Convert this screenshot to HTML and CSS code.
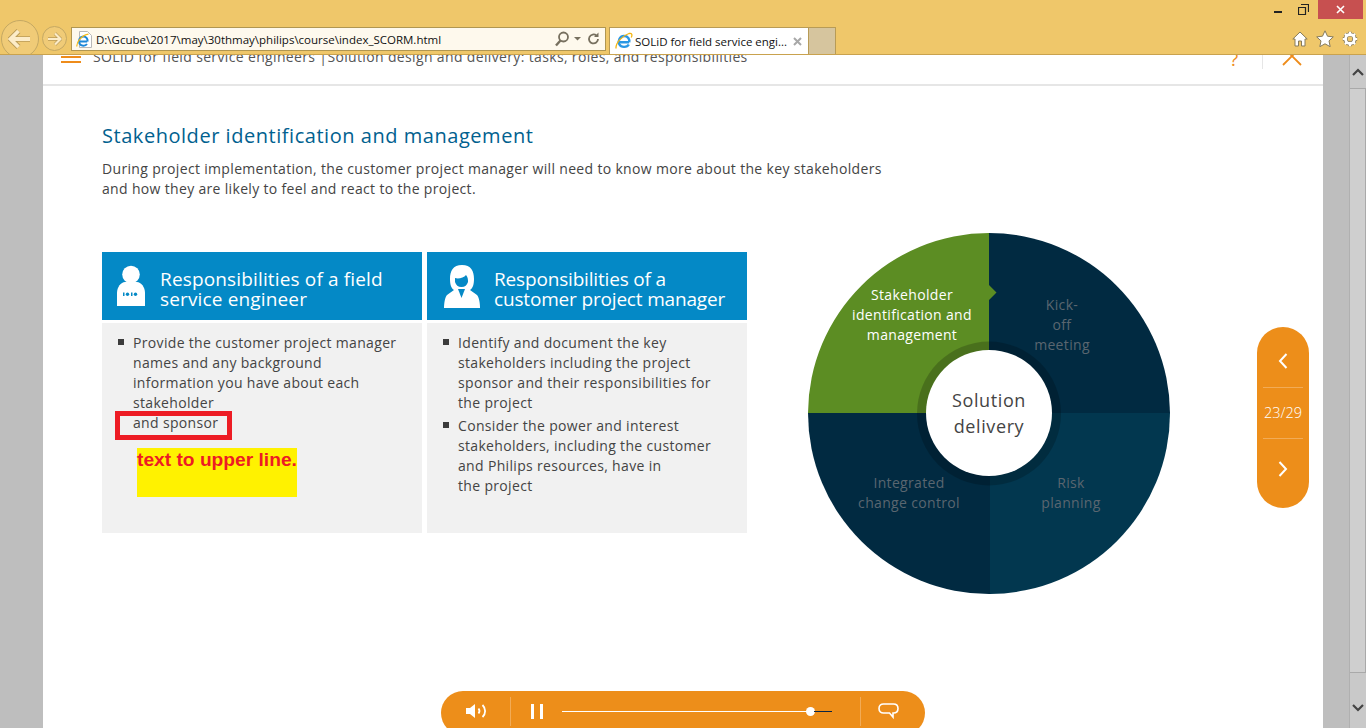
FILE: index.html
```html
<!DOCTYPE html>
<html lang="en">
<head>
<meta charset="utf-8">
<title>SOLiD for field service engineers</title>
<link rel="stylesheet" href="styles.css">
</head>
<body>
<header class="chrome">
  <div class="win-controls">
    <span class="win-min"></span>
    <span class="win-restore"><svg width="11" height="11" viewBox="0 0 11 11"><path d="M3 .5h7.500V8M.5 3.500h7v7h-7z" fill="none" stroke="#222" stroke-width="1.200"/></svg></span>
    <span class="win-close"><svg width="9" height="9" viewBox="0 0 9 9"><path d="M1 1l7 7M8 1l-7 7" stroke="#fff" stroke-width="1.600"/></svg></span>
  </div>
  <div class="toolbar">
    <button class="nav-back"><svg width="24" height="20" viewBox="0 0 24 20"><path d="M10.500 2 2.500 10l8 8M3.500 10H22" fill="none" stroke="#b99b57" stroke-width="5.500"/><path d="M10.500 2 2.500 10l8 8M3.500 10H22" fill="none" stroke="#fcecc8" stroke-width="3.800"/></svg></button>
    <button class="nav-forward"><svg width="15" height="14" viewBox="0 0 15 14"><path d="M8 1.500 13.500 7 8 12.500M13 7H1" fill="none" stroke="#b99b57" stroke-width="3.400"/><path d="M8 1.500 13.500 7 8 12.500M13 7H1" fill="none" stroke="#fcecc8" stroke-width="2.200"/></svg></button>
    <div class="address">
      <svg class="ie-page" width="16" height="17" viewBox="0 0 16 17"><path d="M3.500 .5h8l4 4v12h-12z" fill="#fff" stroke="#b8b8b8"/><path d="M2.800 10.500h8.400M11 13c-1.500 2.200-6 2.400-7.500-.5C2 9 4 5.500 7.200 5.500c3.200 0 4.800 2.500 4.300 5" fill="none" stroke="#1b87d8" stroke-width="2"/><path d="M.8 15.500C.5 11 6 4 12.500 3.200" fill="none" stroke="#f5b915" stroke-width="1.200"/></svg>
      <span class="url">D:\Gcube\2017\may\30thmay\philips\course\index_SCORM.html</span>
      <svg class="addr-tools" width="46" height="16" viewBox="0 0 46 16"><circle cx="8.500" cy="6" r="4.500" fill="none" stroke="#77705f" stroke-width="1.800"/><path d="M5.500 9.500l-4.500 5" stroke="#77705f" stroke-width="2.400"/><path d="M19 6h7l-3.500 3.500z" fill="#77705f"/><path d="M43 8a4.500 4.500 0 1 1-1.500-3.400" fill="none" stroke="#77705f" stroke-width="1.800"/><path d="M43.500 1.500v4.500h-4.500z" fill="#77705f"/></svg>
    </div>
    <div class="tab">
      <svg width="18" height="18" viewBox="0 0 18 18"><path d="M3.500 10.200h10.600M13.800 12.500c-1.500 2.800-7.500 3.500-9.500-.2C2.500 8.500 5 4 9 4c4 0 5.800 3 5.200 6.200" fill="none" stroke="#2a97e4" stroke-width="2.400"/><path d="M1 16.500C.5 11 7.500 3.500 14 1.500c3-.8 3.500 1.500 2.200 4" fill="none" stroke="#f4b612" stroke-width="1.300"/></svg>
      <span class="tab-title">SOLiD for field service engi...</span>
      <svg class="tab-x" width="9" height="9" viewBox="0 0 9 9"><path d="M1 1l7 7M8 1l-7 7" stroke="#a8a8a8" stroke-width="2"/></svg>
    </div>
    <div class="tab-new"></div>
    <div class="tools">
      <svg width="16" height="16" viewBox="0 0 16 16"><path d="M8 1 .8 8H3v7h3.500v-5h3v5H13V8h2.200z" fill="#fff" stroke="#857a5c"/></svg>
      <svg width="18" height="17" viewBox="0 0 18 17"><path d="m9 .8 2.500 5.400 5.800.7-4.300 4 1.200 5.800L9 13.800l-5.200 2.900L5 10.900l-4.300-4 5.800-.7z" fill="#fff" stroke="#857a5c"/></svg>
      <svg width="16" height="16" viewBox="0 0 16 16"><path d="M8 .8v2.800M8 12.400v2.800M.8 8h2.800M12.400 8h2.800M2.900 2.900l2 2M11.100 11.100l2 2M2.900 13.100l2-2M11.100 4.900l2-2" stroke="#857a5c" stroke-width="3.400"/><circle cx="8" cy="8" r="4.500" fill="none" stroke="#857a5c" stroke-width="4.200"/><path d="M8 .8v2.800M8 12.400v2.800M.8 8h2.800M12.400 8h2.800M2.900 2.900l2 2M11.100 11.100l2 2M2.900 13.100l2-2M11.100 4.900l2-2" stroke="#fff" stroke-width="2.200"/><circle cx="8" cy="8" r="4.500" fill="none" stroke="#fff" stroke-width="2.800"/></svg>
    </div>
  </div>
</header>

<div class="viewport">
  <main class="page">
    <div class="course-bar">
      <span class="burger"><i></i><i></i></span>
      <span class="course-title">SOLiD for field service engineers |Solution design and delivery: tasks, roles, and responsibilities</span>
      <span class="help">?</span>
      <span class="bar-sep"></span>
      <svg class="bar-close" width="20" height="20" viewBox="0 0 20 20"><path d="M1 19 19 1M1 1l18 18" stroke="#ee8c1b" stroke-width="1.800"/></svg>
    </div>

    <div class="content">
      <section class="intro">
        <h1>Stakeholder identification and management</h1>
        <p>During project implementation, the customer project manager will need to know more about the key stakeholders<br>and how they are likely to feel and react to the project.</p>
      </section>

      <div class="columns">
        <div class="cards">
          <article class="card">
            <div class="card-head">
              <svg class="card-icon" width="30" height="42" viewBox="0 0 30 42"><circle cx="15" cy="9.500" r="8.800" fill="#fff"/><path d="M1 41V28c0-6 4-11 8-11h12c4 0 8 5 8 11v13z" fill="#fff"/><rect x="7" y="27.500" width="1.500" height="3.500" fill="#0489c6"/><circle cx="11.500" cy="29.200" r="1.700" fill="#0489c6"/><rect x="15" y="27.500" width="1.500" height="3.500" fill="#0489c6"/><circle cx="19.500" cy="29.200" r="1.700" fill="#0489c6"/></svg>
              <h2>Responsibilities of a field service engineer</h2>
            </div>
            <ul class="card-body">
              <li>Provide the customer project manager names and any background information you have about each stakeholder<br>and sponsor</li>
            </ul>
            <div class="annot-box"></div>
            <div class="annot-note">text to upper line.</div>
          </article>
          <article class="card">
            <div class="card-head card-head-b">
              <svg class="card-icon" width="36" height="43" viewBox="0 0 36 43"><path d="M18 0C9 0 6 6 6 14c0 5 1 9 4 11l-7 5C1 32 0 38 0 43h36c0-5-1-11-3-13l-7-5c3-2 4-6 4-11C30 6 27 0 18 0z" fill="#fff"/><path d="M11 13c3 1 9 0 11-3 2 2 2 5 2 7-1 3-3 5-6.500 5S12 20 11 17z" fill="#0489c6"/><path d="M14 24h7l-3.500 9z" fill="#0489c6"/></svg>
              <h2>Responsibilities of a customer project manager</h2>
            </div>
            <ul class="card-body">
              <li>Identify and document the key stakeholders including the project sponsor and their responsibilities for the project</li>
              <li>Consider the power and interest stakeholders, including the customer and Philips resources, have in<br>the project</li>
            </ul>
          </article>
        </div>

        <div class="wheel">
          <svg viewBox="0 0 362 362" width="362" height="362">
            <path d="M181 180V0A181 181 0 0 1 362 180z" fill="#012a41"/>
            <path d="M182 180H362A181 181 0 0 1 182 361z" fill="#02374f"/>
            <path d="M182 180V361A181 181 0 0 1 0 180z" fill="#012a41"/>
            <path d="M181 180H0A181 181 0 0 1 181 0V52l7.500 7.500-7.500 7.500z" fill="#5c8d23"/>
            <circle cx="181" cy="180.500" r="72" fill="#000" fill-opacity=".2"/>
            <circle cx="181" cy="180" r="63" fill="#fff"/>
          </svg>
          <span class="seg seg-active">Stakeholder<br>identification and<br>management</span>
          <span class="seg seg-kick">Kick-<br>off<br>meeting</span>
          <span class="seg seg-change">Integrated<br>change control</span>
          <span class="seg seg-risk">Risk<br>planning</span>
          <span class="hub">Solution<br>delivery</span>
        </div>
      </div>
    </div>

    <nav class="pager">
      <svg width="10" height="16" viewBox="0 0 10 16"><path d="M8.500 1 2 8l6.500 7" fill="none" stroke="#fff" stroke-width="2"/></svg>
      <span class="pager-num">23/29</span>
      <svg width="10" height="16" viewBox="0 0 10 16"><path d="M1.500 1 8 8l-6.500 7" fill="none" stroke="#fff" stroke-width="2"/></svg>
    </nav>

    <div class="player">
      <svg class="p-sound" width="22" height="16" viewBox="0 0 22 16"><path d="M0 5h4l5-4v14l-5-4H0z" fill="#fff"/><path d="M12.500 5.500c1.200 1.500 1.200 3.500 0 5" fill="none" stroke="#fff" stroke-width="1.800"/><path d="M16.500 2c3.500 3.500 3.500 8.500 0 12" fill="none" stroke="#fff" stroke-width="1.800"/></svg>
      <span class="p-sep"></span>
      <span class="p-pause"><i></i><i></i></span>
      <div class="p-track"><span class="p-done"></span><span class="p-knob"></span><span class="p-rest"></span></div>
      <span class="p-sep"></span>
      <svg class="p-chat" width="21" height="17" viewBox="0 0 21 17"><path d="M5.500 1h10c2.500 0 4.500 1.500 4.500 4.500S18 10 15.500 10H15v4l-3.500-4h-6C3 10 1 8.500 1 5.500S3 1 5.500 1z" fill="none" stroke="#fff" stroke-width="1.600"/></svg>
    </div>
  </main>
  <div class="gutter"></div>
  <aside class="scrollbar">
    <span class="sb-btn"><svg width="12" height="8" viewBox="0 0 12 8"><path d="M1 7l5-5 5 5" fill="none" stroke="#444" stroke-width="2.200"/></svg></span>
    <span class="sb-thumb"></span>
    <span class="sb-btn sb-btn-end"><svg width="12" height="8" viewBox="0 0 12 8"><path d="M1 1l5 5 5-5" fill="none" stroke="#444" stroke-width="2.200"/></svg></span>
  </aside>
</div>
</body>
</html>
```
FILE: styles.css
```css
* { box-sizing: border-box; }
html, body { margin: 0; height: 100%; overflow: hidden; }
body { display: flex; flex-direction: column; width: 1366px; height: 728px; background: #bebebe; font-family: "Open Sans", "Noto Sans", sans-serif; color: #444; }

/* browser chrome */
.chrome { position: relative; z-index: 5; height: 55px; flex: none; overflow: hidden; background: #efc76a; border-bottom: 1px solid #c9a24e; font-family: "Open Sans", "Noto Sans", sans-serif; }
.win-controls { display: flex; justify-content: flex-end; align-items: flex-start; height: 19px; padding-right: 3px; }
.win-min { width: 8px; height: 2px; background: #222; margin: 11px 16px 0 0; }
.win-restore { display: flex; margin: 4px 9px 0 0; }
.win-close { display: flex; align-items: center; justify-content: center; width: 45px; height: 19px; background: #c75050; }
.toolbar { display: flex; align-items: flex-start; height: 35px; }
.nav-back { flex: none; width: 38px; height: 38px; margin: 1px 0 0 1px; padding: 0; border: 1px solid #c4a863; border-radius: 50%; background: #f0cb77; display: flex; align-items: center; justify-content: center; }
.nav-forward { flex: none; width: 25px; height: 25px; margin: 7px 0 0 3px; padding: 0; border: 1px solid #c4a863; border-radius: 50%; background: #f0cb77; display: flex; align-items: center; justify-content: center; }
.address { flex: none; display: flex; align-items: center; width: 535px; height: 24px; margin: 8px 0 0 4px; padding: 0 4px; background: #fef9ed; border: 1px solid #b09651; }
.ie-page { flex: none; }
.url { flex: 1; margin-left: 4px; font-size: 11.500px; color: #111; white-space: nowrap; }
.addr-tools { flex: none; }
.tab { flex: none; display: flex; align-items: center; width: 200px; height: 27px; margin: 8px 0 0 3px; padding: 0 6px 0 5px; background: #fff; border: 1px solid #b89b56; border-bottom: 0; font-size: 11.500px; color: #111; }
.tab-title { flex: 1; margin-left: 2px; white-space: nowrap; }
.tab-new { flex: none; width: 27px; height: 27px; margin-top: 8px; background: #d6c59e; border: 1px solid #b89b56; border-left: 0; border-bottom: 0; }
.tools { display: flex; gap: 8px; margin: 11px 0 0 auto; padding-right: 8px; align-items: center; }

/* page */
.viewport { flex: 1; display: flex; min-height: 0; }
.page { position: relative; flex: none; width: 1280px; margin-left: 43px; background: #fff; overflow: hidden; letter-spacing: .33px; }
.gutter { flex: none; width: 26px; background: #bebebe; }
.scrollbar { flex: none; width: 17px; display: flex; flex-direction: column; background: #c9c9c9; border-left: 1px solid #b0b0b0; }
.sb-btn { flex: none; height: 33px; display: flex; align-items: center; justify-content: center; }
.sb-thumb { flex: none; height: 585px; background: #cfcfcf; border: 1px solid #a9a9a9; border-left: 0; }
.sb-btn-end { flex: 1; padding-top: 14px; }

.course-bar { display: flex; align-items: flex-start; height: 31px; padding: 0 21px 0 18px; border-bottom: 2px solid #e6e6e6; }
.burger { flex: none; display: flex; flex-direction: column; gap: 3px; width: 20px; margin-top: 1px; }
.burger i { display: block; height: 2px; background: #ee8c1b; }
.course-title { flex: 1; margin: -8px 0 0 12px; font-size: 14px; line-height: 20px; color: #555; white-space: nowrap; letter-spacing: .35px; }
.help { flex: none; width: 32px; margin-top: -9px; font-size: 19px; line-height: 26px; color: #ee8c1b; letter-spacing: 0; }
.bar-sep { flex: none; width: 1px; height: 14px; background: #e6e6e6; margin-right: 19px; }
.bar-close { flex: none; margin-top: -9px; }

.content { padding: 38px 0 0 59px; }
.intro h1 { margin: 0; font-size: 20px; line-height: 24px; font-weight: 400; color: #01618f; letter-spacing: .54px; }
.intro p { margin: 11px 0 0; font-size: 14px; line-height: 20px; color: #444; }
.columns { display: flex; align-items: flex-start; margin-top: 34px; }
.cards { display: flex; gap: 5px; margin-top: 19px; }
.card { position: relative; display: flex; flex-direction: column; gap: 3px; width: 320px; height: 281px; }
.card-head { display: flex; align-items: center; height: 68px; flex: none; padding-left: 14px; background: #0489c6; color: #fff; }
.card-icon { flex: none; }
.card-head h2 { margin: 6px 0 0 14px; font-size: 19px; line-height: 20px; font-weight: 400; width: 260px; letter-spacing: .15px; }
.card-head-b { padding-left: 17px; }
.card-head-b h2 { margin-left: 14px; letter-spacing: -.17px; }
.card-body { flex: 1; margin: 0; padding: 10px 20px 0 31px; list-style: none; background: #f1f1f1; font-size: 14px; line-height: 20px; color: #444; }
.card-body li { position: relative; margin-bottom: 3px; }
.card-body li::before { content: ""; position: absolute; left: -15px; top: 6px; width: 6px; height: 6px; background: #3c3c3c; }

.annot-box { position: absolute; left: 13px; top: 159px; width: 117px; height: 29px; border: 5px solid #ed1c24; }
.annot-note { position: absolute; left: 35px; top: 196px; width: 160px; height: 49px; background: #fff200; color: #ed1c24; font: 700 19.200px/23px "Liberation Sans", Arial, sans-serif; letter-spacing: 0; white-space: nowrap; }

.wheel { position: relative; flex: none; width: 362px; height: 362px; margin-left: 61px; }
.wheel svg { display: block; }
.seg { position: absolute; font-size: 14px; line-height: 20px; text-align: center; color: #5a6670; white-space: nowrap; transform: translateX(-50%); }
.seg-active { left: 104px; top: 52px; color: #fff; }
.seg-kick { left: 254px; top: 62px; }
.seg-change { left: 101px; top: 240px; }
.seg-risk { left: 263px; top: 240px; }
.hub { position: absolute; left: 181px; top: 154px; transform: translateX(-50%); font-size: 18px; line-height: 26px; letter-spacing: .6px; text-align: center; color: #444; white-space: nowrap; }

.pager { position: absolute; left: 1214px; top: 272px; width: 52px; height: 181px; display: flex; flex-direction: column; align-items: center; border-radius: 26px; background: #ed8e1a; padding-top: 26px; color: #fff; letter-spacing: 0; }
.pager-num { display: block; width: 40px; margin: 18px 0 22px; height: 52px; line-height: 50px; border-top: 1px solid #f2ab56; border-bottom: 1px solid #f2ab56; font-size: 14.500px; font-weight: 300; text-align: center; }
.player { position: absolute; left: 398px; top: 636px; width: 484px; height: 44px; display: flex; align-items: center; padding: 0 0 4px 25px; background: #ed8e1a; border-radius: 22px; }
.p-sep { flex: none; width: 1px; height: 29px; background: #f2ab56; }
.p-sound { flex: none; margin-right: 22px; }
.p-pause { flex: none; display: flex; gap: 6px; margin-left: 20px; }
.p-pause i { display: block; width: 3px; height: 15px; background: #fff; }
.p-track { flex: none; display: flex; align-items: center; width: 270px; margin: 0 28px 0 19px; }
.p-done { flex: none; width: 245px; height: 1px; background: #fff; }
.p-knob { flex: none; width: 9px; height: 9px; border-radius: 50%; background: #fff; margin: 0 -1px; }
.p-rest { flex: 1; height: 1px; background: #0b2545; }
.p-chat { flex: none; margin-left: 17px; }
```
